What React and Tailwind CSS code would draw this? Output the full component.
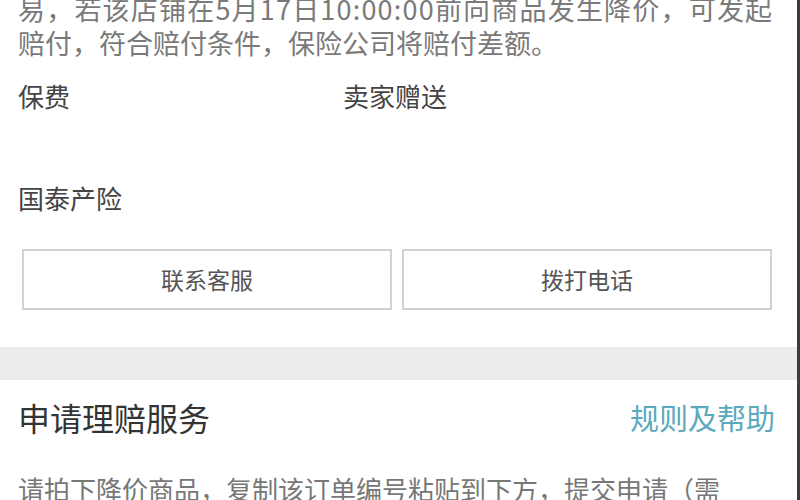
export default function App() {
  return (
    <div
      className="w-[800px] h-[500px] overflow-hidden bg-white border-r-[3px] border-[#3c3c3c]"
      style={{ fontFamily: '"Noto Sans CJK SC", "Noto Sans", sans-serif' }}
    >
      <div className="px-[18px]">
        <p className="mt-[-8px] text-[27px] leading-[34px] text-[#7a7a7a] whitespace-nowrap">
          <span className="tracking-[1.2px]">易，若该店铺在5月17日10:00:00前向商品发生降价，可发起</span>
          <br />
          赔付，符合赔付条件，保险公司将赔付差额。
        </p>

        <div className="mt-[19px] flex text-[26px] leading-[34px] text-[#444]">
          <span className="w-[325px]">保费</span>
          <span>卖家赠送</span>
        </div>

        <div className="mt-[68px] text-[26px] leading-[34px] text-[#444]">国泰产险</div>
      </div>

      <div className="mt-[34px] px-[22px] flex gap-[10px] pr-[25px]">
        <button className="flex-1 h-[61px] border-2 border-[#d2d2d2] text-[23px] text-[#555]">
          联系客服
        </button>
        <button className="flex-1 h-[61px] border-2 border-[#d2d2d2] text-[23px] text-[#555]">
          拨打电话
        </button>
      </div>

      <div className="mt-[37px] h-[33px] bg-[#ececec]" />

      <div className="px-[18px] pr-[22px]">
        <div className="mt-[15px] flex items-center justify-between">
          <span className="text-[32px] leading-[44px] text-[#333]">申请理赔服务</span>
          <span className="text-[29px] leading-[44px] text-[#5ba9bc]">规则及帮助</span>
        </div>
        <p className="mt-[33px] text-[26px] leading-[34px] text-[#777] whitespace-nowrap">
          请拍下降价商品，复制该订单编号粘贴到下方，提交申请（需
        </p>
      </div>
    </div>
  );
}
